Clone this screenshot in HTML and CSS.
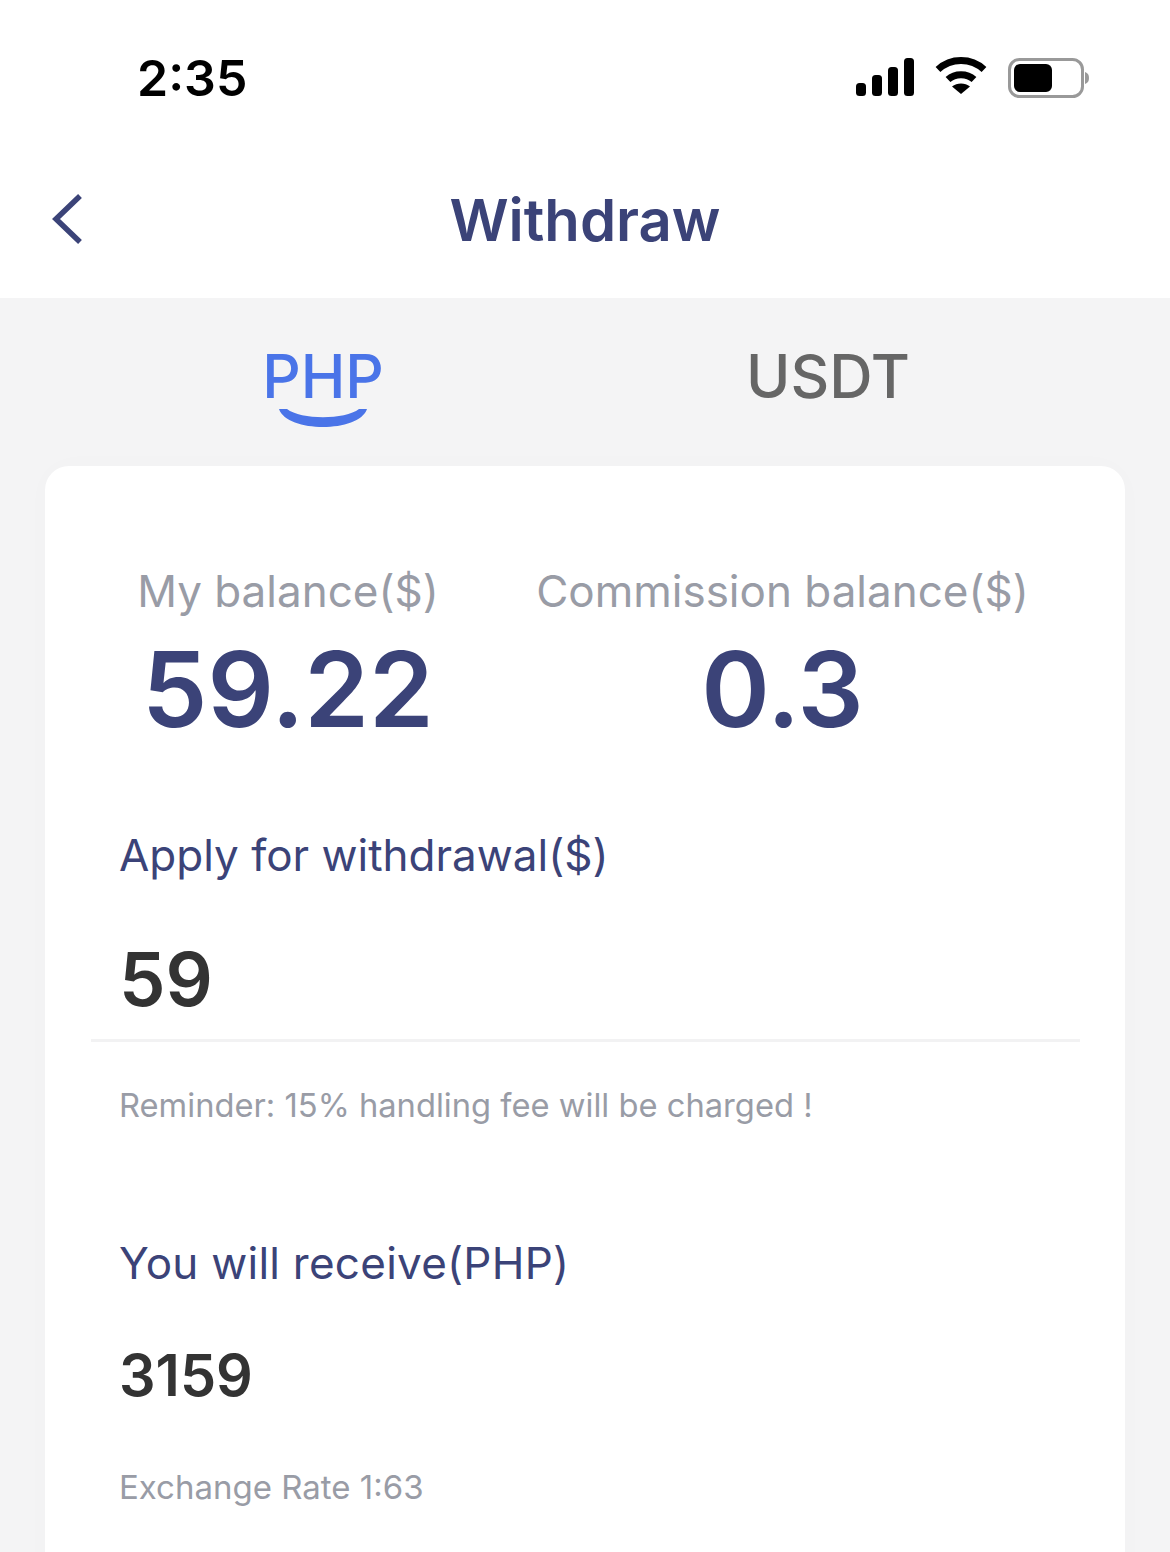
FILE: index.html
```html
<!DOCTYPE html>
<html lang="en">
<head>
<meta charset="utf-8">
<title>Withdraw</title>
<link rel="stylesheet" href="styles.css">
</head>
<body>
<div class="page">
  <div class="status">
    <span class="time">2:35</span>
    <div class="status-icons">
      <svg class="sig" width="58" height="38" viewBox="0 0 58 38"><rect x="0" y="25" width="10" height="13" rx="3.5"/><rect x="16" y="17" width="10" height="21" rx="3.5"/><rect x="32" y="9" width="10" height="29" rx="3.5"/><rect x="48" y="0" width="10" height="38" rx="3.5"/></svg>
      <svg class="wifi" width="52" height="38" viewBox="0 0 52 38"><path d="M3 13.500C16 1.500 36 1.500 49 13.500" fill="none" stroke="#000" stroke-width="7"/><path d="M13 23.500C20 17 32 17 39 23.500" fill="none" stroke="#000" stroke-width="7"/><path d="M26 38L17 30.500C22 26.500 30 26.500 35 30.500Z"/></svg>
      <svg class="batt" width="82" height="40" viewBox="0 0 82 40"><rect x="1.500" y="1.500" width="73" height="37" rx="10" fill="none" stroke="#999" stroke-width="3"/><rect x="6" y="6" width="38" height="28" rx="6"/><path d="M77 14C80 15 81 17 81 20C81 23 80 25 77 26Z" fill="#999"/></svg>
    </div>
  </div>
  <header class="nav">
    <svg class="back" width="32" height="52" viewBox="0 0 32 52"><path d="M28 3L4 26L28 49" fill="none" stroke="#3b4378" stroke-width="5.500"/></svg>
    <h1 class="title">Withdraw</h1>
  </header>
  <main class="body">
    <div class="tabs">
      <div class="tab tab-active">PHP
        <svg class="smile" width="88" height="22" viewBox="0 0 88 22"><path d="M0 3H8C22 14 66 14 80 3H88C84 15 64 21 44 21C24 21 4 15 0 3Z" fill="#4a74e8"/></svg>
      </div>
      <div class="tab">USDT</div>
    </div>
    <section class="card">
      <div class="balances">
        <div class="bal bal-my">
          <div class="bal-label">My balance($)</div>
          <div class="bal-value">59.22</div>
        </div>
        <div class="bal bal-com">
          <div class="bal-label">Commission balance($)</div>
          <div class="bal-value">0.3</div>
        </div>
      </div>
      <div class="field-label first">Apply for withdrawal($)</div>
      <div class="amount">59</div>
      <div class="rule"></div>
      <div class="note">Reminder: 15% handling fee will be charged !</div>
      <div class="field-label second">You will receive(PHP)</div>
      <div class="receive">3159</div>
      <div class="note rate">Exchange Rate 1:63</div>
    </section>
  </main>
</div>
</body>
</html>
```
FILE: styles.css
```css
* { box-sizing: border-box; }
html, body { margin: 0; height: 100%; }
body { font-family: Inter, "Noto Sans", sans-serif; background: #fff; overflow: hidden; }
.page { width: 1170px; height: 1552px; overflow: hidden; display: flex; flex-direction: column; }
.status { height: 150px; flex: none; display: flex; justify-content: space-between; padding: 53px 80px 0 137px; }
.time { font-size: 50px; line-height: 50px; font-weight: 600; color: #000; }
.status-icons { display: flex; align-items: flex-start; gap: 21px; padding-top: 5px; }
.wifi { margin-top: -2px; }
.batt { margin-top: 0; }
.nav { height: 148px; flex: none; display: flex; align-items: center; justify-content: center; position: relative; padding-bottom: 6px; }
.back { position: absolute; left: 52px; top: 43px; }
.title { margin: 0; font-size: 58px; line-height: 70px; font-weight: 600; color: #3b4378; position: relative; top: -1px; }
.body { flex: 1; background: #f4f4f5; padding: 0 45px; }
.tabs { height: 168px; display: flex; padding-top: 44px; }
.tab { font-size: 60px; line-height: 68px; font-weight: 500; color: #666; text-align: center; position: relative; }
.tab-active { color: #4a74e8; width: 556px; }
.tab:not(.tab-active) { width: 454px; }
.smile { position: absolute; left: 234px; top: 64px; }
.card { background: #fff; border-radius: 24px; height: 1200px; padding: 97px 45px 0 46px; box-shadow: 0 0 30px rgba(0,0,0,.015); }
.balances { display: flex; }
.bal { text-align: center; }
.bal-my { width: 394px; }
.bal-com { width: 595px; }
.bal-label { font-size: 44px; line-height: 56px; color: #999ca6; }
.bal-value { font-size: 104px; line-height: 112px; font-weight: 600; color: #3b4378; margin-top: 14px; }
.field-label { font-size: 44px; line-height: 56px; color: #3b4378; padding-left: 28px; }
.first { margin-top: 82px; }
.amount { font-size: 74px; line-height: 90px; font-weight: 600; color: #333; padding-left: 28px; margin-top: 51px; }
.rule { height: 3px; background: #f2f2f3; margin-top: 15px; }
.note { font-size: 32.700px; line-height: 44px; color: #999ca6; padding-left: 28px; margin-top: 41px; }
.second { margin-top: 108px; letter-spacing: .25px; }
.receive { font-size: 57.500px; line-height: 72px; font-weight: 600; color: #333; padding-left: 28px; margin-top: 48px; }
.rate { margin-top: 54px; font-size: 33px; }
```
